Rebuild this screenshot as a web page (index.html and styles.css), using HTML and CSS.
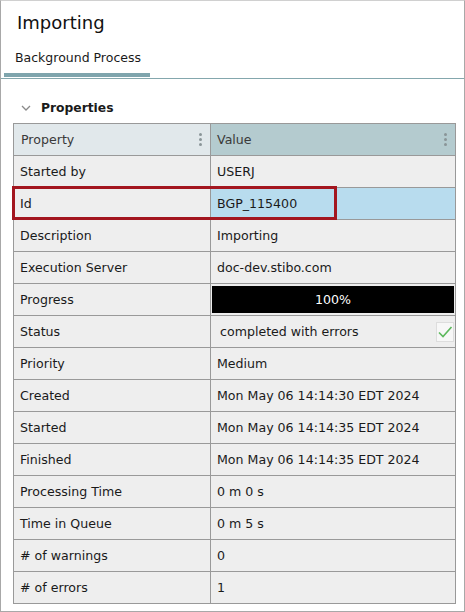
FILE: index.html
```html
<!DOCTYPE html>
<html>
<head>
<meta charset="utf-8">
<link rel="stylesheet" href="styles.css">
</head>
<body>
<div class="frame">
  <h1 class="title">Importing</h1>
  <div class="tabs">
    <div class="tab active">Background Process</div>
  </div>
  <div class="section">
    <div class="section-head">
      <svg class="chev" width="10" height="7" viewBox="0 0 10 7"><path d="M1 1 L5 5 L9 1" fill="none" stroke="#8a8a8a" stroke-width="1.3"/></svg>
      <span>Properties</span>
    </div>
    <div class="table">
      <div class="th th-prop"><span>Property</span><span class="kebab"><i></i><i></i><i></i></span></div>
      <div class="th th-val"><span>Value</span><span class="kebab"><i></i><i></i><i></i></span></div>

      <div class="td">Started by</div><div class="td">USERJ</div>
      <div class="td sel-row">Id<div class="sel-box"></div></div><div class="td sel">BGP_115400</div>
      <div class="td">Description</div><div class="td">Importing</div>
      <div class="td">Execution Server</div><div class="td">doc-dev.stibo.com</div>
      <div class="td">Progress</div><div class="td progress-cell"><div class="progress">100%</div></div>
      <div class="td">Status</div><div class="td status"><span>completed with errors</span><span class="check"><svg width="16" height="16" viewBox="0 0 16 16"><path d="M2 8.5 L6 12.5 L14.5 3" fill="none" stroke="#5cb85c" stroke-width="1.6"/></svg></span></div>
      <div class="td">Priority</div><div class="td">Medium</div>
      <div class="td">Created</div><div class="td">Mon May 06 14:14:30 EDT 2024</div>
      <div class="td">Started</div><div class="td">Mon May 06 14:14:35 EDT 2024</div>
      <div class="td">Finished</div><div class="td">Mon May 06 14:14:35 EDT 2024</div>
      <div class="td">Processing Time</div><div class="td">0 m 0 s</div>
      <div class="td">Time in Queue</div><div class="td">0 m 5 s</div>
      <div class="td"># of warnings</div><div class="td">0</div>
      <div class="td"># of errors</div><div class="td">1</div>
    </div>
  </div>
</div>
</body>
</html>
```

FILE: styles.css
```css
* { box-sizing: border-box; }
html, body { margin: 0; padding: 0; }
body {
  width: 465px;
  height: 612px;
  font-family: "DejaVu Sans", Verdana, sans-serif;
  color: #1a1a1a;
  background: #fff;
}
.frame {
  width: 465px;
  height: 612px;
  border: 1px solid #a8a8a8;
  border-top-color: #d0d0d0;
  background: #fff;
}
.title {
  margin: 0;
  padding: 10px 0 0 16px;
  height: 38px;
  font-size: 18px;
  font-weight: normal;
  line-height: 24px;
  color: #111;
}
.tabs {
  display: flex;
  padding-left: 3px;
  border-bottom: 1px solid #84a7ad;
  height: 40px;
}
.tab {
  width: 146px;
  padding: 11px 0 0 11px;
  font-size: 12.5px;
  line-height: 16px;
}
.tab.active {
  border-bottom: 4px solid #7fa5ad;
  margin-bottom: 1px;
}
.section {
  padding: 0 8px 0 12px;
}
.section-head {
  display: flex;
  align-items: center;
  height: 44px;
  padding: 14px 0 0 8px;
  font-weight: bold;
  font-size: 12.3px;
}
.chev { margin-right: 10px; }
.table {
  display: grid;
  grid-template-columns: 197px 245px;
  grid-auto-rows: 32px;
  border-left: 1px solid #999;
  border-top: 1px solid #999;
  font-size: 12.6px;
}
.th, .td {
  border-right: 1px solid #999;
  border-bottom: 1px solid #999;
  display: flex;
  align-items: center;
  padding-left: 6px;
  position: relative;
}
.td { background: #eeeeee; }
.th {
  justify-content: space-between;
  color: #3a3a3a;
  padding-left: 7px;
  padding-right: 8px;
}
.th-prop { background: #e1e8eb; }
.th-val { background: #b4cbcf; padding-left: 6px; }
.kebab {
  display: flex;
  flex-direction: column;
  gap: 2px;
}
.kebab i {
  display: block;
  width: 3px;
  height: 3px;
  border-radius: 50%;
  background: #8a9598;
}
.sel { background: #b8dcee; }
.sel-box {
  position: absolute;
  left: -2px;
  top: -2px;
  width: 325px;
  height: 34px;
  border: 3px solid #a3161f;
  pointer-events: none;
  z-index: 2;
}
.progress-cell { padding: 2px 1px 2px 1px; }
.progress {
  width: 100%;
  height: 100%;
  background: #000;
  color: #fff;
  display: flex;
  align-items: center;
  justify-content: center;
}
.status {
  justify-content: space-between;
  padding-left: 9px;
  padding-right: 1px;
}
.check {
  width: 18px;
  height: 20px;
  background: #f7f7f7;
  border: 1px solid #ddd;
  display: flex;
  align-items: center;
  justify-content: center;
}
```
